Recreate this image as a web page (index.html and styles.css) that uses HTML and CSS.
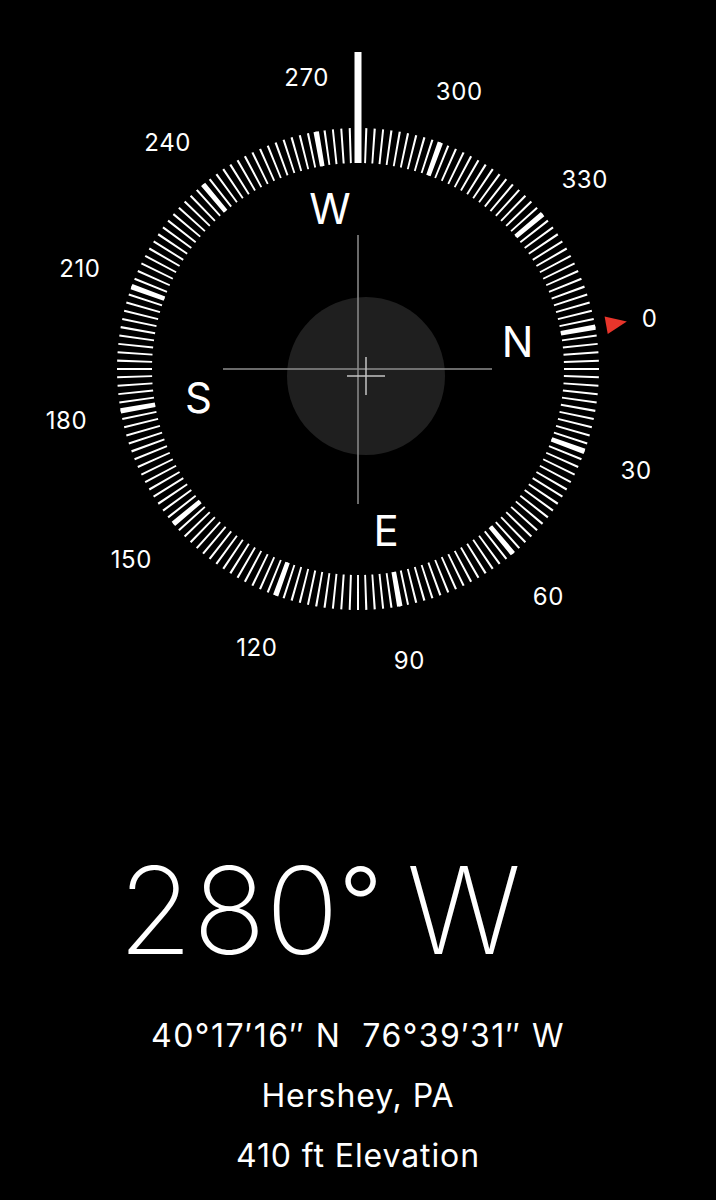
FILE: index.html
```html
<!DOCTYPE html>
<html lang="en">
<head>
<meta charset="utf-8">
<title>Compass</title>
<link rel="stylesheet" href="styles.css">
</head>
<body>
<main class="compass">
  <svg class="dial" viewBox="0 0 716 700" width="716" height="700" aria-label="Compass dial">
    <circle class="ticks-thin" cx="358" cy="369" r="223.5" pathLength="360"></circle>
    <circle class="ticks-major" cx="358" cy="369" r="223.5" pathLength="360"></circle>
    <rect class="indicator" x="354.5" y="52" width="7" height="111"></rect>
    <polygon class="north-mark" points="631,369 610,360 610,378" transform="rotate(-10 358 369)"></polygon>

    <circle class="level" cx="366" cy="376" r="79"></circle>
    <line class="cross" x1="358" y1="235" x2="358" y2="504"></line>
    <line class="cross" x1="223" y1="369" x2="492" y2="369"></line>
    <line class="cross-small" x1="366" y1="357" x2="366" y2="395"></line>
    <line class="cross-small" x1="347" y1="376" x2="385" y2="376"></line>

    <text class="num" x="649.5" y="326.5">0</text>
    <text class="num" x="636.1" y="479">30</text>
    <text class="num" x="548.3" y="604.5">60</text>
    <text class="num" x="409.4" y="669.3">90</text>
    <text class="num" x="256.8" y="655.9">120</text>
    <text class="num" x="131.3" y="568.1">150</text>
    <text class="num" x="66.5" y="429.2">180</text>
    <text class="num" x="79.9" y="276.6">210</text>
    <text class="num" x="167.7" y="151.1">240</text>
    <text class="num" x="306.6" y="86.3">270</text>
    <text class="num" x="459.2" y="99.6">300</text>
    <text class="num" x="584.7" y="187.5">330</text>

    <text class="dir" x="517.5" y="357">N</text>
    <text class="dir" x="386.1" y="546">E</text>
    <text class="dir" x="198.5" y="413">S</text>
    <text class="dir" x="329.9" y="224">W</text>
  </svg>

  <section class="readout">
    <h1 class="heading">280<span class="deg">°</span> W</h1>
    <p class="line coords">40°17′16″ N&nbsp; 76°39′31″ W</p>
    <p class="line">Hershey, PA</p>
    <p class="line">410 ft Elevation</p>
  </section>
</main>
</body>
</html>
```

FILE: styles.css
```css
html, body {
  margin: 0;
  padding: 0;
  background: #000;
}

body {
  color: #fff;
  font-family: Inter, "Noto Sans", "Liberation Sans", sans-serif;
  width: 716px;
  height: 1200px;
  overflow: hidden;
}

.compass {
  display: flex;
  flex-direction: column;
}

.dial {
  display: block;
}

.ticks-thin {
  fill: none;
  stroke: #fff;
  stroke-width: 35;
  stroke-dasharray: 0.51 1.49;
  stroke-dashoffset: 0.255;
}

.ticks-major {
  fill: none;
  stroke: #fff;
  stroke-width: 35;
  stroke-dasharray: 1.28 28.72;
  stroke-dashoffset: 10.64;
}

.indicator {
  fill: #fff;
}

.north-mark {
  fill: #e8352b;
}

.level {
  fill: #1f1f1f;
}

.cross {
  stroke: #8e8e8e;
  stroke-width: 1.5;
}

.cross-small {
  stroke: #c4c4c4;
  stroke-width: 1.5;
}

.num {
  fill: #fff;
  font-family: Inter, "Noto Sans", sans-serif;
  font-size: 24px;
  font-weight: 400;
  letter-spacing: 0.6px;
  text-anchor: middle;
}

.dir {
  fill: #fff;
  font-family: Inter, "Noto Sans", sans-serif;
  font-size: 42px;
  font-weight: 400;
  text-anchor: middle;
}

.readout {
  display: flex;
  flex-direction: column;
}

.heading {
  margin: 150px 0 0;
  padding-left: 118px;
  font-size: 121px;
  line-height: 121px;
  font-weight: 200;
  white-space: pre;
}

.deg {
  font-size: 96px;
  line-height: 0;
  vertical-align: 17px;
  font-weight: 300;
  letter-spacing: -10px;
}

.line {
  margin: 0;
  font-size: 32px;
  line-height: 60px;
  font-weight: 400;
  letter-spacing: 0.9px;
  text-align: center;
  white-space: nowrap;
}

.coords {
  margin-top: 35px;
  letter-spacing: 1.5px;
}
```
